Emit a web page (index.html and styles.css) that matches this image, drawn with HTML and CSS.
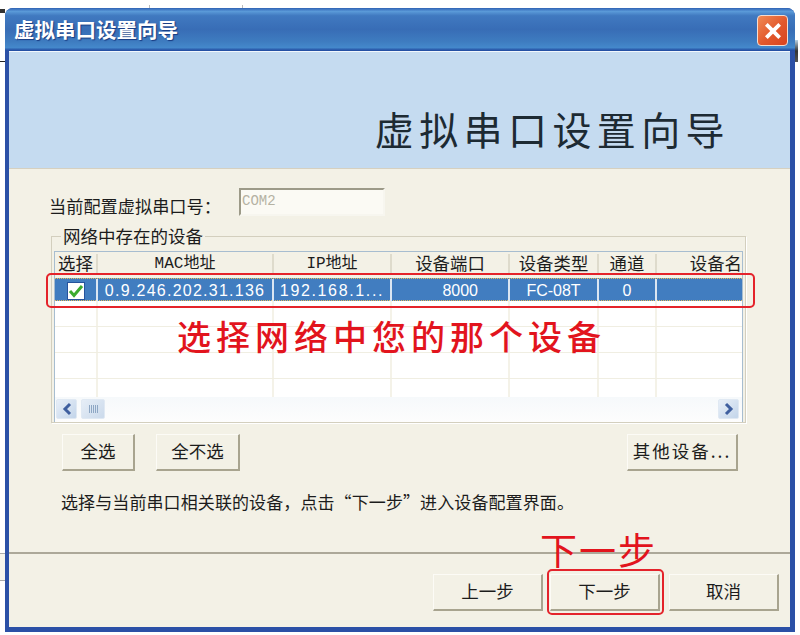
FILE: index.html
```html
<!DOCTYPE html>
<html lang="zh-CN">
<head>
<meta charset="utf-8">
<title>虚拟串口设置向导</title>
<link rel="stylesheet" href="styles.css">
</head>
<body>
<div class="desktop">
  <i class="scrap scrap-tl"></i><i class="scrap scrap-line"></i><i class="scrap scrap-r"></i><i class="scrap scrap-t1"></i><i class="scrap scrap-t2"></i><i class="scrap scrap-bl"></i>
  <div class="window">
    <div class="titlebar">
      <span class="title">虚拟串口设置向导</span>
      <span class="close"><svg width="20" height="20" viewBox="0 0 18 18"><path d="M3 3L15 15M15 3L3 15" stroke="#fff" stroke-width="3.4" fill="none"/></svg></span>
    </div>
    <div class="client">
      <div class="banner"><h1>虚拟串口设置向导</h1></div>
      <div class="main">
        <div class="form-row">
          <span class="form-label">当前配置虚拟串口号：</span>
          <span class="com-input">COM2</span>
        </div>
        <div class="group">
          <div class="legend">网络中存在的设备</div>
          <div class="list">
            <div class="row head">
              <span>选择</span><span class="mono">MAC地址</span><span class="mono">IP地址</span><span>设备端口</span><span>设备类型</span><span>通道</span><span class="end">设备名</span>
            </div>
            <div class="row selected">
              <span><b class="check"><svg width="16" height="14" viewBox="0 0 16 14"><path d="M2 7L6 11.5L14 2" stroke="#3cab2e" stroke-width="3" fill="none"/></svg></b></span>
              <span class="mac">0.9.246.202.31.136</span><span class="ip">192.168.1...</span><span class="port">8000</span><span>FC-08T</span><span>0</span><span></span>
            </div>
            <div class="row blank"><span></span><span></span><span></span><span></span><span></span><span></span><span></span></div>
            <div class="row blank"><span></span><span></span><span></span><span></span><span></span><span></span><span></span></div>
            <div class="row blank"><span></span><span></span><span></span><span></span><span></span><span></span><span></span></div>
            <div class="row blank short"><span></span><span></span><span></span><span></span><span></span><span></span><span></span></div>
            <div class="hscroll">
              <span class="sbtn"><svg width="12" height="14" viewBox="0 0 12 14"><path d="M9 2L4 7L9 12" stroke="#3f5f9f" stroke-width="3" fill="none"/></svg></span>
              <span class="thumb"><i></i><i></i><i></i><i></i><i></i></span>
              <span class="sbtn sbtn-end"><svg width="12" height="14" viewBox="0 0 12 14"><path d="M3 2L8 7L3 12" stroke="#3f5f9f" stroke-width="3" fill="none"/></svg></span>
            </div>
          </div>
        </div>
        <div class="actions">
          <button class="btn btn-all">全选</button>
          <button class="btn btn-none">全不选</button>
          <button class="btn btn-other">其他设备...</button>
        </div>
        <p class="note">选择与当前串口相关联的设备，点击“下一步”进入设备配置界面。</p>
      </div>
      <div class="footer">
        <button class="btn btn-nav">上一步</button>
        <button class="btn btn-nav">下一步</button>
        <button class="btn btn-nav">取消</button>
      </div>
    </div>
  </div>
  <div class="callout callout-row"></div>
  <div class="callout callout-next"></div>
  <div class="red-text red-select">选择网络中您的那个设备</div>
  <div class="red-text red-next">下一步</div>
</div>
</body>
</html>
```
FILE: styles.css
```css
* { box-sizing: border-box; }
html, body { margin: 0; padding: 0; background: #fff; }
body { font-family: "Noto Sans CJK SC", "Liberation Sans", sans-serif; color: #1c1c1c; }
.desktop { position: relative; width: 800px; height: 635px; overflow: hidden; padding: 8px 5px 3px; background: #fff; }

.scrap { position: absolute; display: block; }
.scrap-tl { left: 0; top: 9px; width: 5px; height: 4px; background: #333; }
.scrap-line { left: 0; top: 61px; width: 5px; height: 1px; background: #222; }
.scrap-r { left: 795px; top: 40px; width: 3px; height: 22px; background: linear-gradient(#bcd3e4, #333 50%, #555); }
.scrap-t1 { left: 149px; top: 5px; width: 1px; height: 3px; background: #bbb; }
.scrap-t2 { left: 242px; top: 5px; width: 1px; height: 3px; background: #bbb; }
.scrap-bl { left: 0; top: 553px; width: 5px; height: 28px; border-top: 1px solid #aaa; border-bottom: 1px solid #aaa; background: #f7f5ec; }

.window { width: 790px; height: 624px; border-radius: 8px 8px 0 0; background: #2b50a6; padding: 0 5px 5px 4px; }
.titlebar {
  height: 43px; margin: 0 -5px 0 -4px; padding: 0 7px 0 9px;
  display: flex; align-items: center; justify-content: space-between;
  border-radius: 8px 8px 0 0;
  background: linear-gradient(#2f62b4 0, #5a9ad8 8%, #4079c0 18%, #386db6 50%, #3e7cc0 78%, #4488cb 92%, #2550a4 98%);
}
.title { font-size: 20.5px; line-height: 30px; font-weight: 700; color: #fff; text-shadow: 1px 1px 1px #173a80; margin-top: -1px; }
.close {
  width: 31px; height: 31px; margin-top: 2px; border: 1px solid #f4ddd0; border-radius: 4px;
  display: flex; align-items: center; justify-content: center;
  background: linear-gradient(135deg, #f08a55, #e2582c 55%, #d9431f);
}

.client { height: 576px; display: flex; flex-direction: column; background: #f3f1e6; }
.banner { height: 118px; border-top: 1px solid #f2f7fc; border-bottom: 1px solid #d6d0c0; background: #c5dbf0; display: flex; justify-content: flex-end; }
h1 { margin: 53px 60px 0 0; font-size: 39px; line-height: 46px; letter-spacing: 5.4px; font-weight: 400; color: #1d2a33; }

.main { height: 385px; padding-top: 19px; border-bottom: 2px solid #aca899; }
.form-row { height: 28px; margin-left: 40px; display: flex; align-items: center; }
.form-label { width: 190px; font-size: 17.2px; line-height: 26px; margin-top: 8px; white-space: nowrap; }
.com-input {
  width: 146px; height: 28px; border: 2px solid #f7f6ef; border-top-color: #9c9a88; border-left-color: #9c9a88;
  background: #fbfaf4; color: #b5b2a3; font: 14px/22px "Liberation Mono", monospace; padding-left: 1px;
}

.group { width: 695px; height: 187px; margin: 20px 0 0 42px; border: 1px solid #d3cfbe; box-shadow: 1px 1px 0 #fff; padding: 0 2px; }
.legend { width: fit-content; height: 22px; margin: -11px 0 0 7px; padding: 0 2px; background: #f3f1e6; font-size: 17.5px; line-height: 20px; white-space: nowrap; }
.list { width: 689px; height: 171px; margin-top: 3px; border: 1px solid #a7bdd0; border-width: 1px 1px 2px; background: #fff; }
.row { display: grid; grid-template-columns: 43px 176px 118px 118px 89px 58px 86px; }
.row > span { display: flex; align-items: center; justify-content: center; min-width: 0; }
.head { height: 26px; background: #f3f1e6; font-size: 17.4px; line-height: 18px; }
.head > span { border-right: 2px solid #dedbcc; height: 20px; margin-top: 2px; padding-bottom: 3px; white-space: nowrap; }
.head > span:last-child { border-right: 0; }
.head .mono { font-family: "Liberation Mono", "Noto Sans CJK SC", monospace; font-size: 16px; font-weight: 400; padding-bottom: 0; }
.head .end { justify-content: flex-end; padding-right: 1px; }
.selected { height: 23px; background: #417dc0; color: #fff; font: 16px/23px "Liberation Sans", sans-serif; border-top: 1px dotted #e8b95c; border-bottom: 1px dotted #e8b95c; }
.selected > span { border-right: 2px solid #dbe6f2; }
.selected > span:last-child { border-right: 0; }
.mac { letter-spacing: 1.25px; white-space: nowrap; }
.ip { letter-spacing: 1.65px; white-space: nowrap; }
.port { justify-content: flex-end !important; padding-right: 30px; }
.check { width: 18px; height: 18px; background: #fff; border: 1px solid #26539c; display: flex; align-items: center; justify-content: center; }
.blank { height: 26px; border-bottom: 1px solid #f0eee2; }
.blank > span { border-right: 2px solid #f4f2e8; }
.blank > span:last-child { border-right: 0; }
.short { height: 18px; border-bottom: 0; }
.hscroll { height: 25px; padding: 2px 3px 0 1px; display: flex; align-items: flex-start; gap: 4px; background: linear-gradient(#f6f9fb, #fdfdfd); }
.sbtn { width: 21px; height: 20px; display: flex; align-items: center; justify-content: center; background: linear-gradient(135deg, #e8eff8, #c3d5ea); border: 1px solid #e0e9f3; border-radius: 2px; }
.sbtn-end { margin-left: auto; }
.thumb { width: 24px; height: 20px; display: flex; align-items: center; justify-content: center; gap: 1px; background: linear-gradient(135deg, #e6eef7, #cbdaeb); border: 1px solid #e0e9f3; border-radius: 2px; }
.thumb i { width: 1px; height: 8px; background: #8ea7c4; }

.btn {
  height: 37px; padding: 0 0 3px; border: 1px solid #fcfbf6; border-right: 2px solid #a8a48f; border-bottom: 2px solid #a8a48f;
  background: #f3f1e6; font-family: "Noto Sans CJK SC", "Liberation Sans", sans-serif; font-size: 17.5px; color: #1c1c1c;
}
.actions { height: 37px; margin: 11px 52px 0 53px; display: flex; }
.btn-all { width: 73px; }
.btn-none { width: 84px; margin-left: 21px; }
.btn-other { width: 111px; margin-left: auto; letter-spacing: 2px; }
.note { margin: 19px 0 0 52px; font-size: 17px; line-height: 24px; letter-spacing: .1px; white-space: nowrap; }
.footer { flex: 1; display: flex; padding: 20px 0 0 424px; }
.btn-nav { width: 110px; height: 37px; margin-right: 7px; }
.btn-nav:last-child { margin-left: 2px; }

.callout { position: absolute; border: 2px solid #e4232b; border-radius: 5px; }
.callout-row { left: 46px; top: 273px; width: 709px; height: 35px; }
.callout-next { left: 547px; top: 569px; width: 117px; height: 46px; }
.red-text { position: absolute; color: #e2141d; white-space: nowrap; }
.red-select { left: 177px; top: 312px; font-size: 34px; line-height: 48px; letter-spacing: 5px; font-weight: 500; }
.red-next { left: 540px; top: 524px; font-size: 37px; line-height: 50px; letter-spacing: 2px; font-weight: 400; }
```
